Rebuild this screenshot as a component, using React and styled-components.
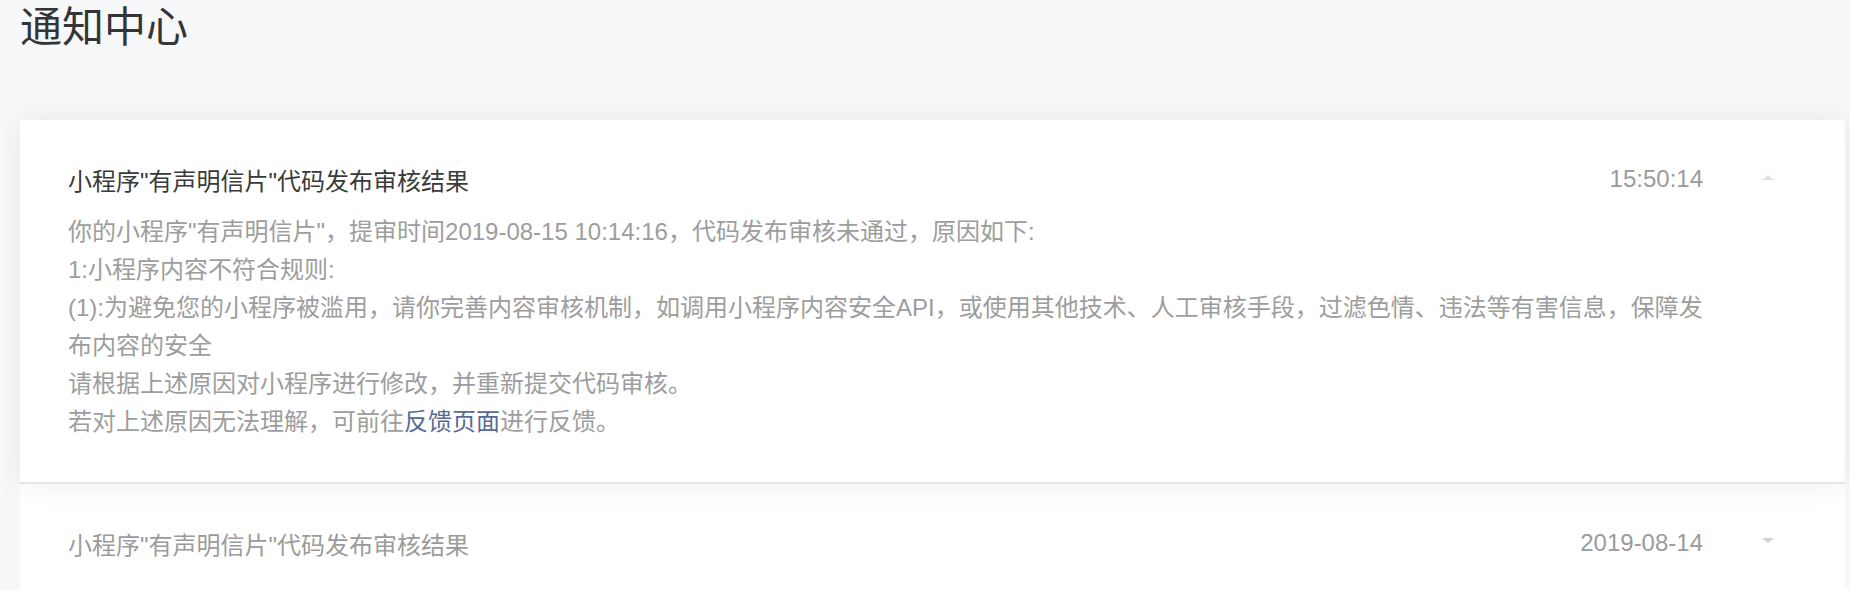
import React from 'react'
import styled, { createGlobalStyle } from 'styled-components'

const GlobalStyle = createGlobalStyle`
    * { box-sizing: border-box; }
    body {
        margin: 0;
        background: #f7f8fa;
        font-family: "Liberation Sans", "Noto Sans CJK SC", sans-serif;
    }
`;

const Page = styled.div`
    padding: 0 5px 0 20px;
    min-height: 590px;
`;

const PageTitle = styled.h1`
    margin: 0 0 64px;
    font-size: 42px;
    line-height: 56px;
    font-weight: 400;
    color: #353535;
`;

const List = styled.div`
    display: flex;
    flex-direction: column;
`;

const Card = styled.div`
    position: relative;
    z-index: ${p => (p.open ? 2 : 1)};
    background: #fff;
    padding: 40px 71px 41px 48px;
    border-bottom: 2px solid #e4e5e9;
    box-shadow: ${p => (p.open ? '0 0 30px rgba(0, 0, 0, 0.07)' : 'none')};
`;

const Header = styled.div`
    display: flex;
    align-items: center;
    height: 38px;
    font-size: 24px;
`;

const Title = styled.div`
    flex: 1;
    color: ${p => (p.open ? '#3a3a3a' : '#9b9b9b')};
`;

const Time = styled.span`
    color: #9b9b9b;
`;

const Arrow = styled.span`
    width: 0;
    height: 0;
    margin-left: 59px;
    margin-top: ${p => (p.open ? '-3px' : '-5px')};
    border-left: 6px solid transparent;
    border-right: 6px solid transparent;
    ${p => p.open
        ? 'border-bottom: 5px solid #dfe0e5;'
        : 'border-top: 5px solid #d2d3d9;'}
`;

const Body = styled.div`
    margin-top: 15px;
    padding-right: 58px;
    font-size: 24px;
    line-height: 38px;
    color: #9d9d9d;

    & p {
        margin: 0;
    }
`;

const Link = styled.a`
    color: #576b95;
    text-decoration: none;
`;

const notices = [
    {
        title: '小程序"有声明信片"代码发布审核结果',
        time: '15:50:14',
        open: true,
    },
    {
        title: '小程序"有声明信片"代码发布审核结果',
        time: '2019-08-14',
        open: false,
    },
]

const NoticeBody = () => (
    <Body>
        <p>你的小程序"有声明信片"，提审时间2019-08-15 10:14:16，代码发布审核未通过，原因如下:</p>
        <p>1:小程序内容不符合规则:</p>
        <p>(1):为避免您的小程序被滥用，请你完善内容审核机制，如调用小程序内容安全API，或使用其他技术、人工审核手段，过滤色情、违法等有害信息，保障发布内容的安全</p>
        <p>请根据上述原因对小程序进行修改，并重新提交代码审核。</p>
        <p>若对上述原因无法理解，可前往<Link href="#">反馈页面</Link>进行反馈。</p>
    </Body>
)

const App = () => (
    <>
        <GlobalStyle />
        <Page>
            <PageTitle>通知中心</PageTitle>
            <List>
                {notices.map((n, i) =>
                    <Card key={i} open={n.open}>
                        <Header>
                            <Title open={n.open}>{n.title}</Title>
                            <Time>{n.time}</Time>
                            <Arrow open={n.open} />
                        </Header>
                        {n.open && <NoticeBody />}
                    </Card>
                )}
            </List>
        </Page>
    </>
)

export default App
